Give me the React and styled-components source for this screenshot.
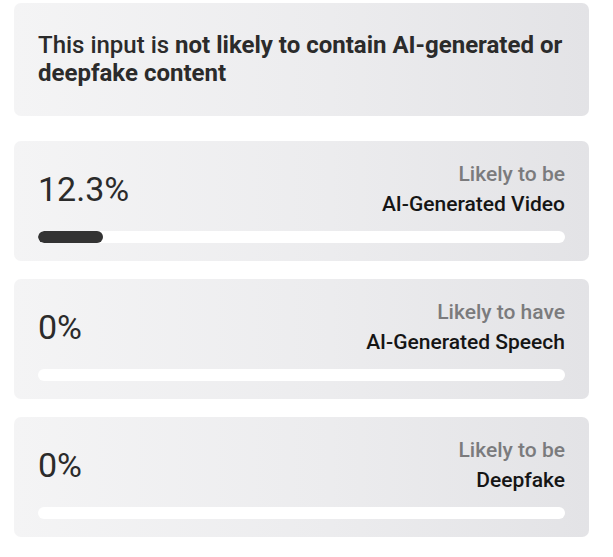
import React from 'react';
import styled, { createGlobalStyle } from 'styled-components';

const GlobalStyle = createGlobalStyle`
  html, body {
    margin: 0;
    padding: 0;
    background: #ffffff;
    font-family: Roboto, "Noto Sans", Arial, sans-serif;
  }
`;

const Page = styled.div`
  box-sizing: border-box;
  width: 613px;
  padding: 3px 24px 20px 14px;
  display: flex;
  flex-direction: column;
  gap: 18px;
`;

const Card = styled.div`
  box-sizing: border-box;
  border-radius: 7px;
  background: linear-gradient(90deg, #f4f4f5 0%, #ececee 55%, #e3e3e6 100%);
  padding: ${p => p.$summary ? '28px 24px 29px' : '18px 24px 18px'};
  margin-bottom: ${p => p.$summary ? '7px' : '0'};
`;

const Summary = styled.p`
  margin: 0;
  font-size: 24px;
  line-height: 28px;
  font-weight: 700;
  color: #2b2b2b;
`;

const Lead = styled.span`
  font-weight: 500;
`;

const Row = styled.div`
  display: flex;
  align-items: center;
  justify-content: space-between;
`;

const Percent = styled.div`
  font-size: 34px;
  font-weight: 400;
  color: #2b2b2b;
  line-height: 40px;
`;

const Label = styled.div`
  text-align: right;
  font-size: 21px;
  line-height: 30px;
  font-weight: 500;
`;

const Hint = styled.div`
  color: #7b7b7d;
`;

const Kind = styled.div`
  color: #151515;
`;

const Track = styled.div`
  margin-top: 12px;
  height: 12px;
  border-radius: 6px;
  background: #ffffff;
  overflow: hidden;
`;

const Fill = styled.div`
  height: 100%;
  border-radius: 6px;
  background: #333333;
`;

const results = [
  { value: 12.3, label: '12.3%', hint: 'Likely to be', kind: 'AI-Generated Video' },
  { value: 0, label: '0%', hint: 'Likely to have', kind: 'AI-Generated Speech' },
  { value: 0, label: '0%', hint: 'Likely to be', kind: 'Deepfake' },
];

export default function App() {
  return (
    <>
      <GlobalStyle />
      <Page>
        <Card $summary>
          <Summary>
            <Lead>This input is </Lead>not likely to contain AI-generated or deepfake content
          </Summary>
        </Card>
        {results.map((r, i) => (
          <Card key={i}>
            <Row>
              <Percent>{r.label}</Percent>
              <Label>
                <Hint>{r.hint}</Hint>
                <Kind>{r.kind}</Kind>
              </Label>
            </Row>
            <Track>
              <Fill style={{ width: `${r.value}%` }} />
            </Track>
          </Card>
        ))}
      </Page>
    </>
  );
}
